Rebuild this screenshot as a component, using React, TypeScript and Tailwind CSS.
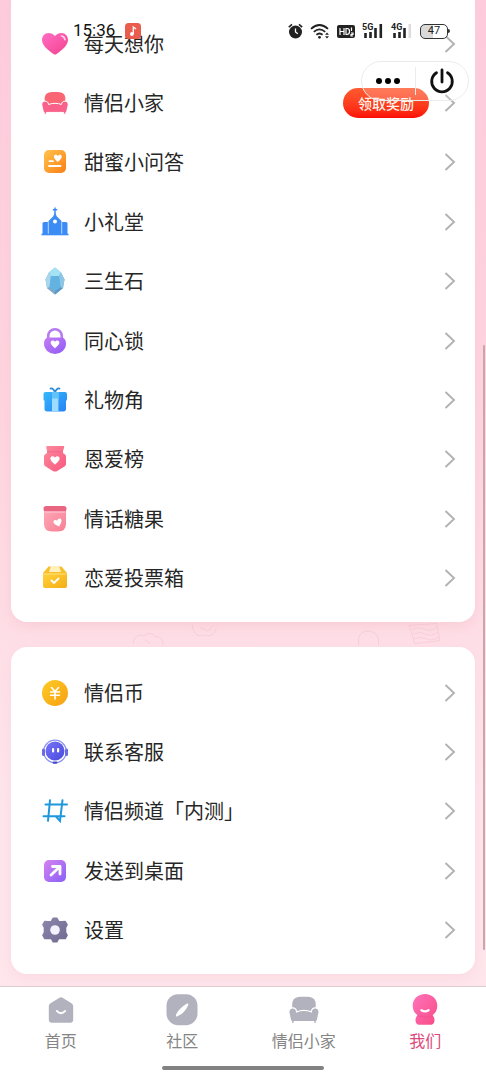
import React from "react";

const HEART = "M0 4.2C-1.2 2.6-4.6.6-4.6-2-4.6-4.8-1.2-5 0-2.8 1.2-5 4.6-4.8 4.6-2 4.6.6 1.2 2.6 0 4.2Z";

const SOFA_BACK = "M4 13C2.800 7.500 4.500 4 9 3.300c3.300-.4 6.700-.4 10 0 4.500.7 6.200 4.200 5 9.700l-3 5H7Z";
const SOFA_BASE = "M3.600 12.200c2.300-.3 3.800 1.200 4 3.300 4.200-1.600 8.600-1.600 12.800 0 .2-2.100 1.700-3.600 4-3.300 2.200.3 3.200 2.200 2.700 4.400l-1.300 5.600c-.2.7-.6 1-1 1.100v1.200c0 .9-2 .9-2.100 0l-.2-1.100H5.500l-.2 1.100c-.1.9-2.100.9-2.100 0v-1.200c-.4-.1-.8-.4-1-1.100L.9 16.600c-.5-2.200.5-4.100 2.700-4.400Z";

function Gradient({ id, from, to }: { id: string; from: string; to: string }) {
  return (
    <defs>
      <linearGradient id={id} x1="0" y1="0" x2="1" y2="1">
        <stop offset="0" stopColor={from} />
        <stop offset="1" stopColor={to} />
      </linearGradient>
    </defs>
  );
}

function Icon({ children }: { children: React.ReactNode }) {
  return (
    <svg viewBox="0 0 28 28" className="h-7 w-7 shrink-0 overflow-visible" aria-hidden="true">
      {children}
    </svg>
  );
}

const MissIcon = () => (
  <Icon>
    <Gradient id="miss" from="#ff6fc4" to="#f4408e" />
    <path d="M14 24.500c-1 0-2-.7-3-1.500C6 19 1 15.300 1 9.800 1 6 3.700 3 7.500 3c2.500 0 4.800 1 6.500 3 1.700-2 4-3 6.500-3 3.800 0 6.500 3 6.500 6.800 0 5.500-5 9.200-10 13.200-1 .8-2 1.500-3 1.500Z" fill="url(#miss)" />
    <path d="M20.500 6c2 .3 3.200 1.500 3.400 3.600" stroke="#ffd3ea" strokeWidth="1.700" strokeLinecap="round" fill="none" />
  </Icon>
);

const HouseIcon = () => (
  <Icon>
    <path d={SOFA_BACK} fill="#fb6674" />
    <path d={SOFA_BASE} fill="#f9608a" stroke="#fff" strokeWidth="1" />
  </Icon>
);

const QuizIcon = () => (
  <Icon>
    <Gradient id="quiz" from="#ffc44d" to="#fb7e14" />
    <rect x="3" y="2" width="22" height="23" rx="5" fill="url(#quiz)" />
    <path d={HEART} transform="translate(16.800 10.500) scale(.85)" fill="#fff" />
    <path d="M8.500 13.200h3.500M8 18h11.500" stroke="#fff" strokeWidth="1.800" strokeLinecap="round" />
  </Icon>
);

const ChurchIcon = () => (
  <Icon>
    <path d="M14-.5V6M11.800 1.800h4.400" stroke="#3989f2" strokeWidth="1.400" />
    <path d="M14 4.200l1.700 4 4.800 4.900V26h-13V13.100l4.800-4.900Z" fill="#3c8cf5" />
    <path d="M1.500 15.500q0-1.500 1.500-1.500h4V26H1.500ZM26.500 15.500q0-1.500-1.500-1.500h-4V26h5.500Z" fill="#3c8cf5" />
    <path d="M7.200 14v12M20.800 14v12" stroke="#a5ccff" strokeWidth=".8" />
    <circle cx="14" cy="13.500" r="2" fill="#fff" />
    <path d="M.5 26.500h27" stroke="#3c8cf5" strokeWidth="1.600" />
  </Icon>
);

const StoneIcon = () => (
  <Icon>
    <path d="M14 .5l6 5 3.500 7-1.500 8.500-8 6.500-8-6.500L4.500 12.500 8 5.500Z" fill="#6cb0dc" />
    <path d="M14 .5l6 5-2 3.500h-8L8 5.500Z" fill="#a4e3f4" />
    <path d="M8 5.500l2 3.500-1.500 11.500L6 21 4.500 12.500Z" fill="#a8d6ec" />
    <path d="M20 5.500l-2 3.500 1.500 11.500L22 21l1.500-8.500Z" fill="#8cc6e4" />
    <path d="M10 9h8l1.500 11.500L14 24l-5.500-3.500Z" fill="#63b3e2" />
    <path d="M14 24v3.500L6 21l2.500-.5Z" fill="#7fa9ca" />
    <path d="M14 24v3.500l8-6.500-2.500-.5Z" fill="#5a97c4" />
  </Icon>
);

const LockIcon = () => (
  <Icon>
    <Gradient id="lock" from="#c57cf4" to="#8d5cf6" />
    <path d="M7.200 13V9a6.800 6.800 0 0 1 13.600 0V13" fill="none" stroke="#b57cf0" strokeWidth="2.600" />
    <path d="M6.500 10.500h15q3.500 1.500 3.500 6a11 10.500 0 0 1-22 0q0-4.500 3.500-6Z" fill="url(#lock)" />
    <path d={HEART} transform="translate(14 17.500) scale(.95)" fill="#fff" />
  </Icon>
);

const GiftIcon = () => (
  <Icon>
    <Gradient id="gift" from="#35b8fb" to="#2582f5" />
    <path d="M14 6C12.700 3.500 10.800 2 9.500 2.600M14 6c1.300-2.500 3.200-4 4.500-3.400" stroke="#2c87d9" strokeWidth="1.700" fill="none" strokeLinecap="round" />
    <path d="M4.500 6h19.500q2 0 2 2v5q0 1.500-1 1.800v8q0 2.700-2.700 2.700H6.200q-2.700 0-2.700-2.700v-8q-1-.3-1-1.800V8q0-2 2-2Z" fill="url(#gift)" />
    <path d="M11 6h6.400v19.500H11Z" fill="#9ddcfd" />
    <path d="M11 6h6.400v6.500H11Z" fill="#63c3f9" />
  </Icon>
);

const MedalIcon = () => (
  <Icon>
    <Gradient id="medal" from="#fb8c9e" to="#f9577e" />
    <path d="M6.500 1h15.500q1.500 0 1.200 1.300L22 6v2l1.800 1.200q1.200.8 1.200 2.200V19q0 1.500-1.200 2.200l-7.600 4.700q-2.200 1-4.400 0l-7.500-4.700Q3 20.500 3 19v-7.600q0-1.400 1.200-2.200L6 8V6L5.200 2.300Q5 1 6.500 1Z" fill="url(#medal)" />
    <path d="M6.500 6.800h15" stroke="#f0688a" strokeWidth="1" />
    <path d={HEART} transform="translate(14 15.500)" fill="#fff" />
  </Icon>
);

const CandyIcon = () => (
  <Icon>
    <Gradient id="candy" from="#ffa7b6" to="#f77f95" />
    <path d="M3 6h22v12.500q0 8-8 8h-6q-8 0-8-8Z" fill="url(#candy)" />
    <rect x="2.500" y="1" width="23" height="5.500" rx="2.500" fill="#e96683" />
    <path d="M4 7h20" stroke="#ffd0d8" strokeWidth="1" />
    <path d={HEART} transform="translate(17 18) rotate(-18) scale(.9)" fill="#fff" />
  </Icon>
);

const VoteIcon = () => (
  <Icon>
    <Gradient id="vote" from="#ffd33d" to="#f5ad13" />
    <path d="M7.500 2.500h13L26 9v2H2V9Z" fill="#f9c02c" />
    <path d="M10 2h8l2 6H8Z" fill="#fff0bd" />
    <path d="M2 9.500h24V22q0 2-2 2H4q-2 0-2-2Z" fill="url(#vote)" />
    <path d="M2.500 10h23" stroke="#ffe690" strokeWidth=".8" />
    <path d="M10.500 16.500l2.500 2.500 4.500-4.500" stroke="#fff" strokeWidth="1.800" fill="none" strokeLinecap="round" />
  </Icon>
);

const CoinIcon = () => (
  <Icon>
    <Gradient id="coin" from="#fdcc25" to="#f79f12" />
    <circle cx="14" cy="14" r="13" fill="url(#coin)" />
    <path d="M10.500 8.500L14 12.500l3.500-4M14 12.500V20M9.500 13h9M9.500 16.300h9" stroke="#fff" strokeWidth="1.600" fill="none" strokeLinecap="round" />
  </Icon>
);

const ServiceIcon = () => (
  <Icon>
    <Gradient id="service" from="#7773fa" to="#4a4bdc" />
    <circle cx="14" cy="13.500" r="11.300" fill="none" stroke="#8c93ef" strokeWidth="1.200" />
    <rect x="1" y="10.500" width="3" height="7.500" rx="1.500" fill="#6a6ce0" />
    <rect x="24" y="10.500" width="3" height="7.500" rx="1.500" fill="#6a6ce0" />
    <circle cx="14" cy="13" r="9.500" fill="url(#service)" />
    <rect x="11" y="10" width="2.200" height="4.500" rx="1.100" fill="#fff" />
    <rect x="16" y="10" width="2.200" height="4.500" rx="1.100" fill="#fff" />
    <rect x="11.500" y="23.500" width="5" height="2.200" rx="1.100" fill="#4a4bc8" />
  </Icon>
);

const ChannelIcon = () => (
  <Icon>
    <path d="M4.500 7.500H26M2.500 19.200H23.500M9 3.200L7 23.800M21.500 3.200L19 24l-4-4.500" stroke="#1d97de" strokeWidth="2" fill="none" strokeLinecap="round" />
  </Icon>
);

const DesktopIcon = () => (
  <Icon>
    <Gradient id="desktop" from="#d782f0" to="#8860f8" />
    <rect x="3" y="3" width="22" height="22" rx="5" fill="url(#desktop)" />
    <path d="M11.500 9.500h7.500V17M18.500 10L10 18" stroke="#fff" strokeWidth="2.800" fill="none" strokeLinecap="round" strokeLinejoin="round" />
  </Icon>
);

const SettingsIcon = () => (
  <Icon>
    <Gradient id="settings" from="#8c86ad" to="#716a91" />
    <path
      d="M12.300 2.500h3.400l1.800 3.300 3.700.2 2.900-.2 1.700 3-1.500 2.600v5.200l1.500 2.600-1.700 3-2.900-.2-3.700.2-1.800 3.300h-3.400l-1.800-3.300-3.700-.2-2.900.2-1.700-3 1.500-2.600v-5.200L2.200 8.800l1.700-3 2.900.2 3.700-.2Z"
      fill="url(#settings)"
      stroke="url(#settings)"
      strokeWidth="2"
      strokeLinejoin="round"
    />
    <circle cx="14" cy="14" r="4.800" fill="#f3f1fb" />
  </Icon>
);

type Item = {
  label: string;
  icon: React.FC;
  badge?: string;
};

const features: Item[] = [
  { label: "每天想你", icon: MissIcon },
  { label: "情侣小家", icon: HouseIcon, badge: "领取奖励" },
  { label: "甜蜜小问答", icon: QuizIcon },
  { label: "小礼堂", icon: ChurchIcon },
  { label: "三生石", icon: StoneIcon },
  { label: "同心锁", icon: LockIcon },
  { label: "礼物角", icon: GiftIcon },
  { label: "恩爱榜", icon: MedalIcon },
  { label: "情话糖果", icon: CandyIcon },
  { label: "恋爱投票箱", icon: VoteIcon },
];

const services: Item[] = [
  { label: "情侣币", icon: CoinIcon },
  { label: "联系客服", icon: ServiceIcon },
  { label: "情侣频道「内测」", icon: ChannelIcon },
  { label: "发送到桌面", icon: DesktopIcon },
  { label: "设置", icon: SettingsIcon },
];

function MenuRow({ item }: { item: Item }) {
  const ItemIcon = item.icon;
  return (
    <li className="flex">
      <a href="#" className="flex flex-1 items-center pr-[19px] pl-[30px]">
        <ItemIcon />
        <span className="ml-[15px] flex-1 text-xl text-[#262626]">{item.label}</span>
        {item.badge && (
          <span className="mr-[15px] flex h-[30px] w-[86px] items-center justify-center rounded-full bg-linear-to-b from-[#ff5a30] to-[#fb0a06] text-sm font-medium text-[#fff3e8]">
            {item.badge}
          </span>
        )}
        <svg viewBox="0 0 12 18" className="h-[18px] w-3 shrink-0" aria-hidden="true">
          <path d="M1.500 1L10 9l-8.500 8" fill="none" stroke="#b2b2b2" strokeWidth="1.900" />
        </svg>
      </a>
    </li>
  );
}

function StatusBar() {
  return (
    <div className="absolute inset-x-0 top-[22px] z-20 flex h-[18px] items-center pr-9 pl-[73px]">
      <span className="font-['Roboto',sans-serif] text-[17px] text-[#111]">15:36</span>
      <svg viewBox="0 0 16 16" className="ml-2.5 h-4 w-4" aria-hidden="true">
        <rect width="16" height="16" rx="3.500" fill="#ea5c4d" />
        <path d="M8.300 11V4l2.800 2" stroke="#fff" strokeWidth="1.300" fill="none" />
        <circle cx="6.900" cy="11" r="1.900" fill="#fff" />
      </svg>
      <div className="ml-auto flex items-center gap-[7px]">
        <svg viewBox="0 0 15 16" className="h-4 w-[15px]" aria-hidden="true">
          <circle cx="7.500" cy="9" r="6.500" fill="#222" />
          <path d="M7.500 5.500V9l2.300 1.800" stroke="#fff" strokeWidth="1.300" fill="none" />
          <path d="M.8 4.200L4 1.400M14.200 4.200L11 1.400" stroke="#222" strokeWidth="1.600" />
        </svg>
        <svg viewBox="0 0 20 16" className="h-4 w-5" aria-hidden="true">
          <path d="M1 5.800Q9.500-1.800 18 5.800M3.800 8.900q5.700-5 11.400 0M6.400 11.800q3.100-2.600 6.200 0" stroke="#222" strokeWidth="1.800" fill="none" />
          <circle cx="9.500" cy="14.300" r="1.400" fill="#222" />
          <path d="M17 9.500l2 2.300h-4ZM17 15.500l2-2.300h-4Z" fill="#222" />
        </svg>
        <svg viewBox="0 0 18 13" className="h-[13px] w-[18px]" aria-hidden="true">
          <rect width="18" height="13" rx="2" fill="#222" />
          <path d="M3 3v7M7 3v7M3 6.500h4M9 3.500v6h1q2.500 0 2.500-3t-2.500-3H9ZM14.500 2.500v3.500M14 8h2v1.500h-2V11h2" stroke="#fff" strokeWidth="1.200" fill="none" />
        </svg>
        <Signal label="5G" weak={false} />
        <Signal label="4G" weak />
        <div className="flex items-center">
          <span className="flex h-[15px] w-7 items-center justify-center rounded-[5px] border border-[#333] bg-linear-to-r from-[#dadada] from-45% to-white to-45% font-['Roboto',sans-serif] text-[11px] text-[#222]">
            47
          </span>
          <span className="h-1 w-0.5 rounded-r bg-[#333]" />
        </div>
      </div>
    </div>
  );
}

function Signal({ label, weak }: { label: string; weak: boolean }) {
  return (
    <div className="relative h-4 w-[22px]">
      <span className="absolute top-0 left-0 font-['Roboto',sans-serif] text-[9px] leading-2 font-bold text-[#222]">
        {label}
      </span>
      <svg viewBox="0 0 22 16" className="h-4 w-[22px]" aria-hidden="true">
        <path d="M3.500 15v-5M8.500 15V9M13.500 15V5" stroke="#222" strokeWidth="2.600" />
        <path d="M18.800 15V1" stroke={weak ? "#ddd" : "#222"} strokeWidth="2.600" />
      </svg>
    </div>
  );
}

function Capsule() {
  return (
    <div className="absolute top-[61px] right-[17px] z-10 flex h-10 w-[108px] items-center rounded-full border border-[#ececec] bg-white/20">
      <button type="button" aria-label="更多" className="flex flex-1 items-center justify-center gap-[3px]">
        <span className="h-[6px] w-[6px] rounded-full bg-black" />
        <span className="h-[6px] w-[6px] rounded-full bg-black" />
        <span className="h-[6px] w-[6px] rounded-full bg-black" />
      </button>
      <span className="h-7 w-px bg-[#ececec]" />
      <button type="button" aria-label="关闭" className="flex flex-1 items-center justify-center">
        <svg viewBox="0 0 26 26" className="h-[26px] w-[26px]" aria-hidden="true">
          <path d="M13 2v12M7.500 4.800a10.300 10.300 0 1 0 11 0" stroke="#111" strokeWidth="2.800" fill="none" strokeLinecap="round" />
        </svg>
      </button>
    </div>
  );
}

const tabs = [
  {
    label: "首页",
    active: false,
    icon: (
      <>
        <path d="M14.300 3q1.700-1 3.400 0l9.800 6q1.500 1 1.500 2.800v14.700q0 3-3 3H6q-3 0-3-3V11.800Q3 10 4.500 9Z" fill="#b1b2be" />
        <path d="M11.500 17q4.500 5 9 0" stroke="#fff" strokeWidth="2" fill="none" strokeLinecap="round" />
      </>
    ),
  },
  {
    label: "社区",
    active: false,
    icon: (
      <>
        <rect x=".5" y=".2" width="31" height="31" rx="11.500" fill="#b1b2be" />
        <path d="M22 9.500c1.500.5-2 6.500-5 9.300-2.800 2.500-6.500 4.200-7 3.500-.6-.8 1.200-4.600 4-7.300 3-3 6.500-5.800 8-5.500Z" fill="#fff" />
      </>
    ),
  },
  {
    label: "情侣小家",
    active: false,
    icon: (
      <g transform="translate(0 -1) scale(1.140 1.220)">
        <path d={SOFA_BACK} fill="#b1b2be" />
        <path d={SOFA_BASE} fill="#b1b2be" stroke="#fff" strokeWidth="1" />
      </g>
    ),
  },
  {
    label: "我们",
    active: true,
    icon: (
      <>
        <Gradient id="me" from="#ff74bb" to="#f84b86" />
        <path d="M16 0c7 0 12.300 5 12.300 11.800 0 4.200-2 7.700-4.800 9.500 1.800 1.700 2.600 5 1.500 7.400-.8 1.800-2.500 2-4 2H11c-1.500 0-3.200-.2-4-2-1.100-2.400-.3-5.700 1.500-7.400-2.800-1.800-4.800-5.300-4.800-9.500C3.700 5 9 0 16 0Z" fill="url(#me)" />
        <path d="M8.500 21.800q7.500 3 15 0" stroke="#f04a89" strokeWidth=".7" fill="none" />
        <path d="M12.500 16.200q3.500 2.400 7 0" stroke="#fff" strokeWidth="2.400" fill="none" strokeLinecap="round" />
      </>
    ),
  },
];

function TabBar() {
  return (
    <nav className="border-t border-[#ddcdd1] bg-white pt-[7px] pb-2.5">
      <ul className="grid grid-cols-4">
        {tabs.map((tab) => (
          <li key={tab.label}>
            <a href="#" className="flex flex-col items-center gap-0.5">
              <svg viewBox="0 0 32 32" className={tab.label === "首页" ? "h-8 w-8 p-px" : "h-8 w-8"} aria-hidden="true">
                {tab.icon}
              </svg>
              <span className={tab.active ? "text-base leading-6 text-[#dc4a7b]" : "text-base leading-6 text-[#858585]"}>
                {tab.label}
              </span>
            </a>
          </li>
        ))}
      </ul>
      <div className="mx-auto mt-3.5 h-1 w-1/3 rounded-full bg-[#828282]" />
    </nav>
  );
}

// faint line drawings on the pink backdrop, between the two cards
function Doodles() {
  return (
    <svg viewBox="0 0 486 25" className="absolute inset-x-0 top-full h-[25px] w-full" fill="none" stroke="#eebfca" strokeOpacity=".5" aria-hidden="true">
      <path d="M128 22c0-8 7-10 11-8 4-4 10-3 12 1 5-1 9 3 8 9M140 18l6 4" />
      <path d="M190 2c0 9 6 14 12 11 5 3 12-1 13-7M198 5l8 4 6-6" />
      <path d="M364 24v-7c1-6 5-8 10-8 6 0 11 4 11 10v5" />
      <path d="M417 3l29-2 3 18-26 3ZM420 7q7-3 13 0t13-2M421 12q7-3 13 0t13-2M422 17q7-3 13 0t13-2" />
    </svg>
  );
}

function App() {
  return (
    <div className="relative flex min-h-screen flex-col bg-linear-to-b from-[#fdcbdd] via-[#fed5e0] via-40% to-[#fee6ec] to-75% font-['Noto_Sans_CJK_SC',sans-serif]">
      <StatusBar />
      <Capsule />
      <main className="flex flex-1 flex-col gap-[25px] px-[11px] pb-3">
        <section className="relative rounded-b-2xl bg-white py-3.5 shadow-[0_4px_14px_#f9ccd6]">
          <ul className="grid h-[594px] auto-rows-fr">
            {features.map((item) => (
              <MenuRow key={item.label} item={item} />
            ))}
          </ul>
          <Doodles />
        </section>
        <section className="rounded-2xl bg-white pt-4 pb-3.5 shadow-[0_4px_14px_#fbd9e1]">
          <ul className="grid h-[297px] auto-rows-fr">
            {services.map((item) => (
              <MenuRow key={item.label} item={item} />
            ))}
          </ul>
        </section>
      </main>
      <TabBar />
      <div className="absolute top-[345px] right-px h-[605px] w-0.5 rounded-full bg-[#c9a5ae]" />
    </div>
  );
}

export default App;
